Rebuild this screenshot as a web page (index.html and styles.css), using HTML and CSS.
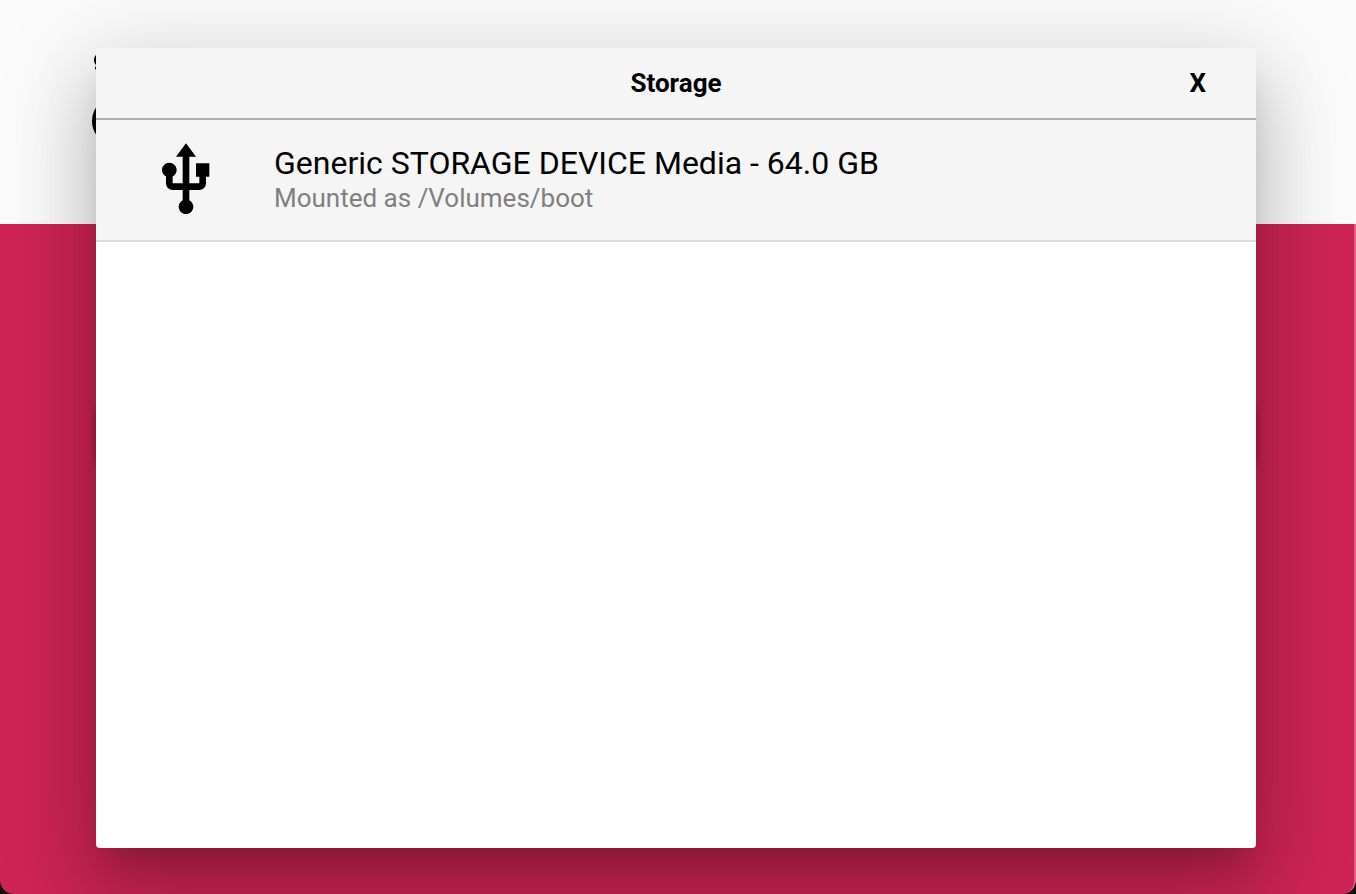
FILE: index.html
```
<!DOCTYPE html>
<html lang="en">
<head>
    <meta charset="UTF-8">
    <meta name="viewport" content="width=device-width, initial-scale=1.0">
    <title>Storage</title>
    <link rel="stylesheet" href="styles.css">
</head>
<body>
    <div class="window">
        <header class="banner">
            <svg class="logo" viewBox="0 0 80 100" aria-hidden="true">
                <ellipse cx="16" cy="16" rx="14" ry="10"/>
                <ellipse cx="16" cy="24" rx="13" ry="5"/>
                <ellipse cx="14" cy="77" rx="14" ry="19"/>
            </svg>
        </header>
        <main class="content">
            <div class="actions"></div>
        </main>

        <!-- Storage popup -->
        <div class="overlay">
            <section class="popup" role="dialog" aria-labelledby="popup-title">
                <div class="popup-header">
                    <h1 id="popup-title">Storage</h1>
                    <button type="button" class="close" title="Close">X</button>
                </div>
                <ul class="drives">
                    <li class="drive">
                        <svg class="drive-icon" viewBox="0 0 24 24" aria-hidden="true">
                            <path d="M15 7v4h1v2h-3V5h2l-3-4-3 4h2v8H8v-2.07c.7-.37 1.2-1.08 1.2-1.93 0-1.21-.99-2.2-2.2-2.2-1.21 0-2.2.99-2.2 2.2 0 .85.5 1.56 1.2 1.93V13c0 1.11.89 2 2 2h3v3.05c-.71.37-1.2 1.1-1.2 1.95 0 1.22.99 2.2 2.2 2.2 1.21 0 2.2-.98 2.2-2.2 0-.85-.49-1.58-1.2-1.95V15h3c1.11 0 2-.89 2-2v-2h1V7h-4z"/>
                        </svg>
                        <div class="drive-text">
                            <p class="drive-name">Generic STORAGE DEVICE Media - 64.0 GB</p>
                            <p class="drive-mount">Mounted as /Volumes/boot</p>
                        </div>
                    </li>
                </ul>
            </section>
        </div>
    </div>
</body>
</html>
```

FILE: styles.css
```
* {
    box-sizing: border-box;
}
body {
    font-family: Roboto, sans-serif;
    margin: 0;
    background-color: #111;
}
.window {
    position: relative;
    display: flex;
    flex-direction: column;
    min-height: 100vh;
    overflow: hidden;
    border-radius: 0 0 14px 14px;
    background-color: #cd2455;
}
.banner {
    height: 224px;
    padding: 44px 92px;
    background-color: #fbfbfb;
}
.logo {
    display: block;
    width: 80px;
    height: 100px;
}
.content {
    flex: 1;
    padding: 178px 100px 0 98px;
    border-right: 2px solid #dc5a80;
    border-radius: 0 0 14px 0;
}
.actions {
    height: 60px;
    box-shadow: 0 4px 10px rgba(0, 0, 0, 0.4);
}
.overlay {
    position: absolute;
    inset: 0;
    display: flex;
    padding: 48px 100px 46px 96px;
}
.popup {
    flex: 1;
    overflow: hidden;
    background-color: white;
    border-radius: 4px;
    box-shadow: 0 22px 30px -14px rgba(0, 0, 0, 0.2),
        0 48px 76px 6px rgba(0, 0, 0, 0.14),
        0 18px 92px 16px rgba(0, 0, 0, 0.12);
}
.popup-header {
    display: grid;
    grid-template-columns: 1fr auto 1fr;
    align-items: center;
    height: 72px;
    padding: 0 40px;
    background-color: #f5f5f5;
    border-bottom: 2px solid #afafaf;
}
.popup-header h1 {
    grid-column: 2;
    margin: 0;
    font-size: 26px;
    line-height: 32px;
    font-weight: bold;
}
.close {
    justify-self: end;
    padding: 0 10px;
    border: none;
    background: none;
    color: black;
    font-family: inherit;
    font-size: 26px;
    line-height: 32px;
    font-weight: bold;
    cursor: pointer;
}
.drives {
    margin: 0;
    padding: 0;
    list-style: none;
}
.drive {
    display: flex;
    align-items: center;
    gap: 48px;
    height: 122px;
    padding: 0 50px;
    background-color: #f5f5f5;
    border-bottom: 2px solid #dcdcdc;
}
.drive-icon {
    flex: none;
    width: 80px;
    height: 80px;
}
.drive-text p {
    margin: 0;
}
.drive-name {
    font-size: 32px;
    line-height: 36px;
}
.drive-text .drive-mount {
    color: gray;
    font-size: 26px;
    line-height: 34px;
}
```
